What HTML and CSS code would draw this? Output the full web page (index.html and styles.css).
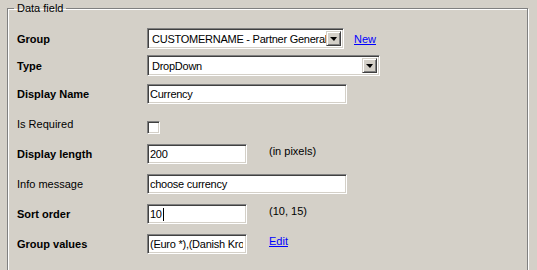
FILE: index.html
```html
<!DOCTYPE html>
<html lang="en">
<head>
    <meta charset="UTF-8">
    <title>Data field</title>
    <link rel="stylesheet" href="styles.css">
</head>
<body>
    <fieldset class="panel">
        <legend>Data field</legend>

        <div class="form">
            <div class="row row-select">
                <label class="label strong">Group</label>
                <div class="dropdown dropdown-group">
                    <span class="dropdown-text">CUSTOMERNAME - Partner General</span>
                    <span class="dropdown-btn"><span class="arrow"></span></span>
                </div>
                <a href="#" class="link link-new">New</a>
            </div>

            <div class="row row-select row-type">
                <label class="label strong">Type</label>
                <div class="dropdown dropdown-type">
                    <span class="dropdown-text">DropDown</span>
                    <span class="dropdown-btn"><span class="arrow"></span></span>
                </div>
            </div>

            <div class="row">
                <label class="label strong">Display Name</label>
                <input class="field field-wide" type="text" value="Currency">
            </div>

            <div class="row">
                <label class="label">Is Required</label>
                <input class="check" type="checkbox">
            </div>

            <div class="row">
                <label class="label strong">Display length</label>
                <input class="field field-short" type="text" value="200">
                <span class="hint">(in pixels)</span>
            </div>

            <div class="row">
                <label class="label">Info message</label>
                <input class="field field-wide" type="text" value="choose currency">
            </div>

            <div class="row">
                <label class="label strong">Sort order</label>
                <div class="field field-short field-caret">10<span class="caret"></span></div>
                <span class="hint">(10, 15)</span>
            </div>

            <div class="row">
                <label class="label strong">Group values</label>
                <input class="field field-short" type="text" value="(Euro *),(Danish Krone),(US Dollar)">
                <a href="#" class="link hint">Edit</a>
            </div>
        </div>
    </fieldset>
</body>
</html>
```

FILE: styles.css
```css
:root {
    --face: #d4d0c8;
    --shadow: #808080;
    --dark: #404040;
    --light: #fff;
}

* {
    box-sizing: border-box;
}

body {
    margin: 0;
    background-color: var(--face);
    font-family: 'Liberation Sans', Arial, sans-serif;
    font-size: 11px;
    color: #000;
    height: 270px;
    overflow: hidden;
}

.panel {
    margin: 2px 9px 0 7px;
    padding: 0;
    border: 1px solid var(--shadow);
    box-shadow: inset 1px 1px var(--light), 1px 1px var(--light);
    height: 290px;
}

.panel legend {
    margin-left: 6px;
    padding: 0 3px;
    line-height: 13px;
    font-size: 11px;
}

.form {
    padding: 13px 0 0 9px;
    display: flex;
    flex-direction: column;
}

.row {
    display: flex;
    align-items: center;
    height: 20px;
    margin-bottom: 10px;
}

.row-select {
    height: 21px;
    margin-bottom: 6px;
}

.row-type {
    margin-bottom: 8px;
}

.label {
    width: 130px;
    flex-shrink: 0;
}

.strong {
    font-weight: bold;
}

/* sunken 3d edge shared by text boxes and dropdowns */
.field,
.dropdown,
.check {
    border: 1px solid;
    border-color: var(--shadow) var(--light) var(--light) var(--shadow);
    box-shadow: inset 1px 1px var(--dark), inset -1px -1px var(--face);
    background-color: #fff;
}

.field {
    height: 20px;
    margin: 0;
    padding: 0 3px 0 2px;
    font-family: 'Liberation Sans', Arial, sans-serif;
    font-size: 11px;
    letter-spacing: -0.25px;
    color: #000;
    outline: none;
}

.field-wide {
    width: 200px;
}

.field-short {
    width: 100px;
}

.field-caret {
    display: flex;
    align-items: center;
    line-height: 16px;
}

.caret {
    display: inline-block;
    width: 1px;
    height: 13px;
    margin-left: 1px;
    background-color: #000;
}

.check {
    appearance: none;
    width: 13px;
    height: 13px;
    margin: 6px 0 0 0;
}

.dropdown {
    height: 21px;
    display: flex;
    align-items: stretch;
    padding: 2px;
    font-size: 11px;
    letter-spacing: -0.25px;
}

.dropdown-group {
    width: 197px;
}

.dropdown-type {
    width: 233px;
}

.dropdown-text {
    flex: 1;
    padding-left: 2px;
    line-height: 17px;
    white-space: nowrap;
    overflow: hidden;
}

.dropdown-btn {
    width: 15px;
    flex-shrink: 0;
    display: flex;
    align-items: center;
    justify-content: center;
    background-color: var(--face);
    border: 1px solid;
    border-color: var(--face) var(--dark) var(--dark) var(--face);
    box-shadow: inset 1px 1px var(--light), inset -1px -1px var(--shadow);
}

.arrow {
    width: 0;
    height: 0;
    border-left: 4px solid transparent;
    border-right: 3px solid transparent;
    border-top: 4px solid #000;
}

.link {
    color: #0000ff;
    text-decoration: underline;
}

.link-new {
    margin-left: 10px;
}

.hint {
    align-self: flex-start;
    margin-left: 22px;
    line-height: 14px;
    font-size: 11px;
}
```
